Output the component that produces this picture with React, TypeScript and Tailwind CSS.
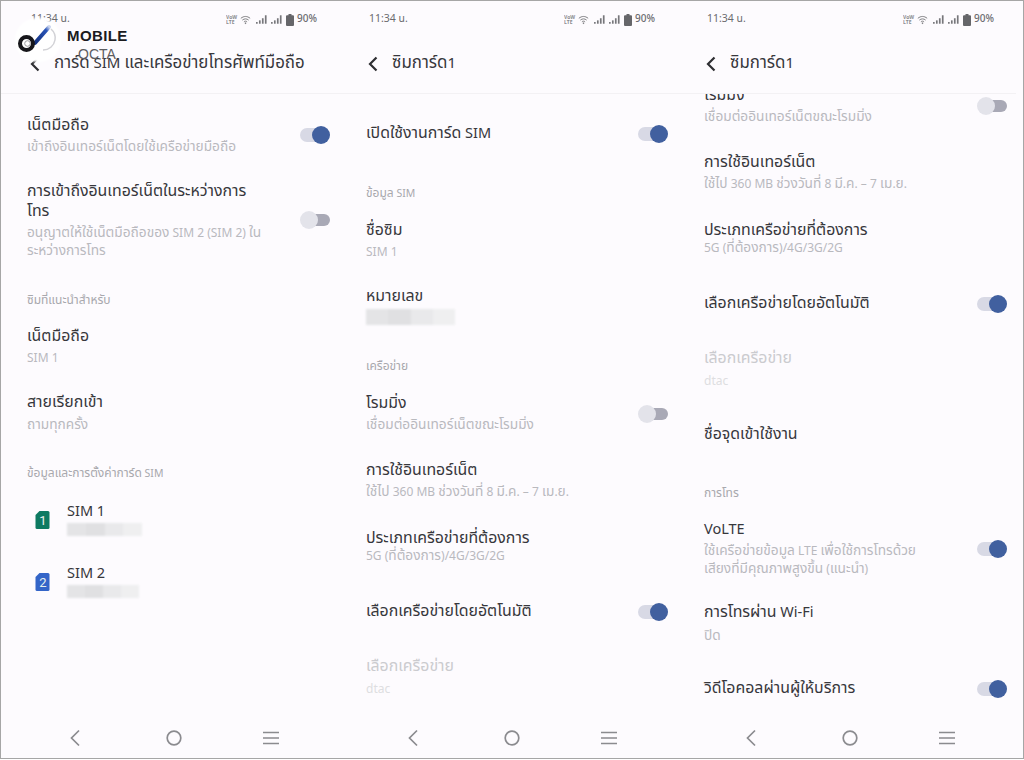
type RowProps = {
  title: string[];
  sub?: string[];
  toggle?: "on" | "off";
  className?: string;
  subClass?: string;
  titleClass?: string;
  subColor?: string;
  toggleClass?: string;
};

// ฟอนต์ไทยเล็กกว่าละตินเมื่อขนาดเท่ากัน จึงขยายเฉพาะส่วนภาษาไทย
function Mixed({ text, thai }: { text: string; thai: string }) {
  return (
    <>
      {text.split(/([\u0E00-\u0E7F]+)/).map((part, i) =>
        i % 2 === 1 ? (
          <span key={i} className={`leading-none ${thai}`}>
            {part}
          </span>
        ) : (
          part
        ),
      )}
    </>
  );
}

function Toggle({ on, className = "" }: { on: boolean; className?: string }) {
  if (on) {
    return (
      <div className={`relative h-[18px] w-[30px] shrink-0 ${className}`}>
        <div className="absolute left-0 top-[2px] h-[14px] w-[24px] rounded-full bg-[#d8d9e5]" />
        <div className="absolute right-0 top-0 h-[18px] w-[18px] rounded-full bg-[#41609f]" />
      </div>
    );
  }
  return (
    <div className={`relative h-[18px] w-[30px] shrink-0 ${className}`}>
      <div className="absolute right-0 top-[3px] h-[12px] w-[22px] rounded-full bg-[#a9a9b6]" />
      <div className="absolute left-0 top-0 h-[18px] w-[18px] rounded-full bg-[#e3e3ea]" />
    </div>
  );
}

function Row({ title, sub, toggle, className = "", subClass = "mt-[2px]", titleClass = "text-[#37373c]", subColor = "text-[#b9b9be]", toggleClass = "" }: RowProps) {
  return (
    <div className={`flex items-center justify-between pr-[9px] ${className}`}>
      <div>
        <div className={`text-[14.5px] leading-[20px] ${sub ? "pt-px" : ""} ${titleClass}`}>
          {title.map((t) => (
            <div key={t}>
              <Mixed text={t} thai="text-[15.9px]" />
            </div>
          ))}
        </div>
        {sub && (
          <div className={`text-[12px] leading-[18px] ${subColor} ${subClass}`}>
            {sub.map((t) => (
              <div key={t}>
                <Mixed text={t} thai="text-[13.7px]" />
              </div>
            ))}
          </div>
        )}
      </div>
      {toggle && <Toggle on={toggle === "on"} className={toggleClass} />}
    </div>
  );
}

function Section({ children, className = "" }: { children: string; className?: string }) {
  return (
    <div className={`h-4 text-[10.5px] leading-4 text-[#a8a8ad] ${className}`}>
      <Mixed text={children} thai="text-[12px]" />
    </div>
  );
}

function StatusBar() {
  return (
    <div className="flex h-[36px] items-center justify-between pl-[30px] pr-[22px] pt-px text-[#6b6b6f]">
      <span className="text-[10.5px]">11:34 น.</span>
      <div className="flex items-center">
        <div className="flex w-[12px] flex-col overflow-hidden text-[5px] font-bold leading-[5px] text-[#8a8a8e]">
          <span>VoW</span>
          <span>LTE</span>
        </div>
        <svg width="11" height="10" viewBox="0 0 13 11" fill="none" stroke="#77777b" strokeWidth="1.1" className="ml-[2px]">
          <path d="M1 3.500C4.500 .6 8.500 .6 12 3.500M2.800 5.600c2.400-1.900 5-1.900 7.400 0M4.600 7.600c1.300-1 2.500-1 3.800 0" />
          <path d="M6.500 10.400 5.300 9c.8-.6 1.600-.6 2.400 0z" fill="#77777b" stroke="none" />
        </svg>
        <Signal className="ml-[5px]" />
        <Signal className="ml-[4px]" />
        <svg width="8" height="12" viewBox="0 0 8 12" fill="#66666a" className="ml-[4px]">
          <path d="M2.500 0h3v1.200H7a1 1 0 0 1 1 1V11a1 1 0 0 1-1 1H1a1 1 0 0 1-1-1V2.200a1 1 0 0 1 1-1h1.500z" />
        </svg>
        <span className="ml-[3px] text-[10px] font-medium">90%</span>
      </div>
    </div>
  );
}

function Signal({ className = "" }: { className?: string }) {
  return (
    <svg width="11" height="9" viewBox="0 0 13 10" fill="#77777b" className={className}>
      <rect x="0" y="8" width="2" height="2" />
      <rect x="3.500" y="6" width="2" height="4" />
      <rect x="7" y="3.500" width="2" height="6.500" />
      <rect x="10.500" y="0" width="2" height="10" />
    </svg>
  );
}

function Header({ title }: { title: string }) {
  return (
    <div className="flex h-[57px] items-center border-b border-[#f3f1f4] pb-[2px] pl-[28px]">
      <svg width="12" height="16" viewBox="0 0 12 16" fill="none" stroke="#2e2e32" strokeWidth="2.200">
        <path d="M9.500 1.500 3 8l6.500 6.500" />
      </svg>
      <span className="ml-[13px] text-[15px] text-[#37373c]">
        <Mixed text={title} thai="text-[16.900px]" />
      </span>
    </div>
  );
}

function NavBar() {
  return (
    <div className="mt-auto flex h-[30px] items-start pl-[68px] pt-px">
      <svg width="12" height="18" viewBox="0 0 12 18" fill="none" stroke="#8b8b8f" strokeWidth="1.700">
        <path d="M10 1.500 2.500 9l7.500 7.500" />
      </svg>
      <svg width="18" height="18" viewBox="0 0 18 18" fill="none" stroke="#8b8b8f" strokeWidth="1.700" className="ml-[84px]">
        <circle cx="9" cy="9" r="6.800" />
      </svg>
      <svg width="16" height="18" viewBox="0 0 16 18" fill="none" stroke="#8b8b8f" strokeWidth="1.700" className="ml-[80px]">
        <path d="M0 3.500h16M0 9h16M0 14.500h16" />
      </svg>
    </div>
  );
}

function Redacted({ width, className = "" }: { width: string; className?: string }) {
  return (
    <div className={`flex h-[13px] overflow-hidden blur-[1px] ${width} ${className}`}>
      <div className="w-1/4 bg-[#e4e4e6]" />
      <div className="w-1/4 bg-[#e0e0e2]" />
      <div className="w-1/4 bg-[#e9e9eb]" />
      <div className="w-1/4 bg-[#efeff0]" />
    </div>
  );
}

function SimRow({ n, color, className, width }: { n: number; color: string; className: string; width: string }) {
  return (
    <div className={`flex items-center ${className}`}>
      <svg width="15" height="18" viewBox="0 0 15 18" className="ml-[8px] mt-[2px]">
        <path d="M4.500 0H13a1.500 1.500 0 0 1 1.500 1.500v15A1.500 1.500 0 0 1 13 18H2a1.500 1.500 0 0 1-1.500-1.500V4z" fill={color} />
        <text x="8" y="14" textAnchor="middle" fontSize="13" fill="#e8f0ee" fontFamily="Roboto, sans-serif">
          {n}
        </text>
      </svg>
      <div className="ml-[17px]">
        <div className="text-[14.5px] leading-[20px] text-[#37373c]">SIM {n}</div>
        <Redacted width={width} className="mt-[1px]" />
      </div>
    </div>
  );
}

function Logo() {
  return (
    <div className="absolute left-[14px] top-[17px] flex">
      <div className="relative h-[44px] w-[46px]">
        <div className="absolute inset-0 rounded-full bg-white blur-[1px]" />
        <svg width="46" height="44" viewBox="0 0 46 44" fill="none" className="absolute inset-0 overflow-visible">
          <defs>
            <linearGradient id="stroke" x1="0" y1="1" x2="1" y2="0">
              <stop offset="0" stopColor="#122f7c" />
              <stop offset="0.8" stopColor="#2a55b8" />
              <stop offset="1" stopColor="#c9d4ee" />
            </linearGradient>
          </defs>
          <path d="M36 11a12 12 0 0 1 4 11 12 12 0 0 1-12 10" stroke="#d2d2d6" strokeWidth="1.500" />
          <path d="M20 25 34 9" stroke="url(#stroke)" strokeWidth="4" strokeLinecap="round" />
          <circle cx="11.500" cy="25.500" r="6.500" stroke="#17171b" strokeWidth="4" />
          <circle cx="12.500" cy="25.500" r="2.800" stroke="#9a9a9e" strokeWidth="1" />
        </svg>
      </div>
      <div className="relative w-[70px]">
        <span className="absolute left-[6px] top-[7px] text-[15px] font-bold tracking-[0.4px] text-[#1b1b1f] [font-family:'Liberation_Sans',sans-serif]">MOBILE</span>
        <span className="absolute left-[17px] top-[26px] text-[14px] text-[#5c5c60] [font-family:'Liberation_Sans',sans-serif]">OCTA</span>
      </div>
    </div>
  );
}

function NetworkRows({ first }: { first: string }) {
  return (
    <>
      <Row className={first} title={["โรมมิ่ง"]} sub={["เชื่อมต่ออินเทอร์เน็ตขณะโรมมิ่ง"]} toggle="off" />
      <Row className="mt-[26px]" title={["การใช้อินเทอร์เน็ต"]} sub={["ใช้ไป 360 MB ช่วงวันที่ 8 มี.ค. – 7 เม.ย."]} />
      <Row className="mt-[27px]" title={["ประเภทเครือข่ายที่ต้องการ"]} sub={["5G (ที่ต้องการ)/4G/3G/2G"]} subClass="mt-[-2px]" />
      <Row className="mt-[37px]" title={["เลือกเครือข่ายโดยอัตโนมัติ"]} toggle="on" />
      <Row
        className="mt-[34px]"
        title={["เลือกเครือข่าย"]}
        sub={["dtac"]}
        subClass="mt-[3px]"
        titleClass="text-[#cbcbcf]"
        subColor="text-[#dedee1]"
      />
    </>
  );
}

export default function App() {
  return (
    <div className="relative flex h-[759px] w-[1024px] overflow-hidden border border-[#a6a6a6] bg-[#fdfbfe] [font-family:'Noto_Sans_Thai','Noto_Sans',Roboto,sans-serif]">
      {/* คอลัมน์ 1 */}
      <div className="flex w-[338px] flex-col">
        <StatusBar />
        <Header title="การ์ด SIM และเครือข่ายโทรศัพท์มือถือ" />
        <div className="flex-1 overflow-hidden pl-[26px] pt-px">
          <Row className="mt-[20px]" title={["เน็ตมือถือ"]} sub={["เข้าถึงอินเทอร์เน็ตโดยใช้เครือข่ายมือถือ"]} toggle="on" toggleClass="mb-[2px]" />
          <Row
            className="mt-[25px]"
            title={["การเข้าถึงอินเทอร์เน็ตในระหว่างการ", "โทร"]}
            sub={["อนุญาตให้ใช้เน็ตมือถือของ SIM 2 (SIM 2) ใน", "ระหว่างการโทร"]}
            toggle="off"
            toggleClass="mb-[2px]"
          />
          <Section className="mt-[33px]">ซิมที่แนะนำสำหรับ</Section>
          <Row className="mt-[17px]" title={["เน็ตมือถือ"]} sub={["SIM 1"]} />
          <Row className="mt-[25px]" title={["สายเรียกเข้า"]} sub={["ถามทุกครั้ง"]} subClass="mt-[3px]" />
          <Section className="mt-[32px]">ข้อมูลและการตั้งค่าการ์ด SIM</Section>
          <SimRow n={1} color="#0e7a62" className="mt-[20px]" width="w-[75px]" />
          <SimRow n={2} color="#3465c8" className="mt-[28px]" width="w-[72px]" />
        </div>
        <NavBar />
      </div>

      {/* คอลัมน์ 2 */}
      <div className="flex w-[338px] flex-col">
        <StatusBar />
        <Header title="ซิมการ์ด1" />
        <div className="flex-1 overflow-hidden pl-[27px] pt-px">
          <Row className="mt-[29px]" title={["เปิดใช้งานการ์ด SIM"]} toggle="on" />
          <Section className="mt-[42px]">ข้อมูล SIM</Section>
          <Row className="mt-[18px]" title={["ชื่อซิม"]} sub={["SIM 1"]} />
          <Row className="mt-[26px]" title={["หมายเลข"]} />
          <Redacted width="w-[89px]" className="mt-[2px] h-[16px]" />
          <Section className="mt-[34px]">เครือข่าย</Section>
          <NetworkRows first="mt-[18px]" />
        </div>
        <NavBar />
      </div>

      {/* คอลัมน์ 3 */}
      <div className="flex w-[339px] flex-col">
        <StatusBar />
        <Header title="ซิมการ์ด1" />
        <div className="flex-1 overflow-hidden pl-[27px] pt-px">
          <NetworkRows first="mt-[-10px]" />
          <Row className="mt-[35px]" title={["ชื่อจุดเข้าใช้งาน"]} />
          <Section className="mt-[41px]">การโทร</Section>
          <Row
            className="mt-[17px]"
            title={["VoLTE"]}
            sub={["ใช้เครือข่ายข้อมูล LTE เพื่อใช้การโทรด้วย", "เสียงที่มีคุณภาพสูงขึ้น (แนะนำ)"]}
            toggle="on"
          />
          <Row className="mt-[24px]" title={["การโทรผ่าน Wi-Fi"]} sub={["ปิด"]} subClass="mt-[4px]" />
          <Row className="mt-[34px]" title={["วิดีโอคอลผ่านผู้ให้บริการ"]} toggle="on" />
        </div>
        <NavBar />
      </div>

      <Logo />
    </div>
  );
}
